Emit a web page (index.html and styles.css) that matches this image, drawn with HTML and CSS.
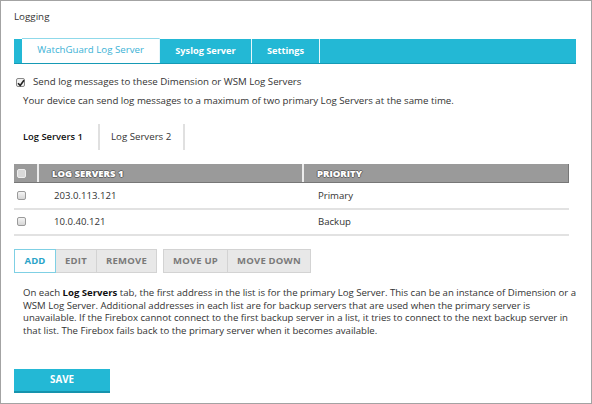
FILE: index.html
```html
<!DOCTYPE html>
<html>
<head>
<meta charset="utf-8">
<link rel="stylesheet" href="styles.css">
</head>
<body>
<div class="frame">
  <div class="title">Logging</div>
  <div class="tabbar">
    <div class="tab active">WatchGuard Log Server</div>
    <div class="tab syslog">Syslog Server</div>
    <div class="tab settings">Settings</div>
    <div class="tab rest"></div>
  </div>
  <label class="check-row">
    <span class="cb checked"><svg width="8" height="8" viewBox="0 0 8 8"><path d="M1 4.2 L3.2 6.4 L7 1.2" fill="none" stroke="#222" stroke-width="1.6"/></svg></span>
    <span>Send log messages to these Dimension or WSM Log Servers</span>
  </label>
  <p class="note">Your device can send log messages to a maximum of two primary Log Servers at the same time.</p>
  <div class="subtabs">
    <div class="subtab current">Log Servers 1</div>
    <div class="subtab">Log Servers 2</div>
  </div>
  <div class="table">
    <div class="row head">
      <div class="c-cb"><span class="cb hcb"></span></div>
      <div class="c-addr">LOG SERVERS 1</div>
      <div class="c-prio">PRIORITY</div>
    </div>
    <div class="row">
      <div class="c-cb"><span class="cb"></span></div>
      <div class="c-addr">203.0.113.121</div>
      <div class="c-prio">Primary</div>
    </div>
    <div class="row">
      <div class="c-cb"><span class="cb"></span></div>
      <div class="c-addr">10.0.40.121</div>
      <div class="c-prio">Backup</div>
    </div>
  </div>
  <div class="buttons">
    <div class="group">
      <div class="btn add">ADD</div>
      <div class="btn edit">EDIT</div>
      <div class="btn remove">REMOVE</div>
    </div>
    <div class="group">
      <div class="btn up">MOVE UP</div>
      <div class="btn down">MOVE DOWN</div>
    </div>
  </div>
  <p class="desc">On each <strong class="em">Log Servers</strong> tab, the first address in the list is for the primary Log Server. This can be an instance of Dimension or a WSM Log Server. Additional addresses in each list are for backup servers that are used when the primary server is unavailable. If the Firebox cannot connect to the first backup server in a list, it tries to connect to the next backup server in that list. The Firebox fails back to the primary server when it becomes available.</p>
  <div class="save">SAVE</div>
</div>
</body>
</html>
```
FILE: styles.css
```css
* { box-sizing: border-box; }
html, body { margin: 0; padding: 0; }
body {
  font-family: "Open Sans", "DejaVu Sans", sans-serif;
  color: #333;
  background: #fff;
}
.frame {
  width: 592px;
  height: 404px;
  border: 1px solid #a3a3a3;
  padding: 9px 15px 0 13px;
  overflow: hidden;
}
.title {
  font-size: 9.8px;
  line-height: 14px;
  color: #333;
}
.tabbar {
  margin-top: 15px;
  display: flex;
  height: 25px;
  background: #23b8d5;
  border-bottom: 1px solid #169ab5;
  padding-left: 8px;
}
.tab {
  font-size: 9.2px;
  line-height: 24px;
  color: #fff;
  font-weight: 700;
  text-align: center;
  border-right: 1px solid #e6f7fb;
  white-space: nowrap;
}
.tab.active {
  width: 138px;
  background: #fff;
  color: #3bb2d6;
  font-weight: 400;
  font-size: 9.7px;
  border-top: 1px solid #8fd9ea;
  line-height: 22px;
  margin-top: -1px;
  height: 25px;
}
.tab.syslog { width: 92px; }
.tab.settings { width: 68px; }
.tab.rest { flex: 1; border-right: none; }
.check-row {
  display: flex;
  align-items: center;
  margin-top: 11px;
  padding-left: 2px;
  font-size: 9.7px;
  line-height: 14px;
}
.cb {
  display: inline-block;
  width: 9px;
  height: 9px;
  border: 1px solid #9a9a9a;
  border-radius: 2px;
  background: linear-gradient(#f4f4f4, #d6d6d6);
  position: relative;
}
.cb.checked {
  width: 9px;
  height: 9px;
  background: #f2f2f2;
  border-color: #888;
  margin-right: 8px;
}
.cb.checked svg { position: absolute; left: 0; top: 0; }
.note {
  margin: 5px 0 0 9px;
  font-size: 9.7px;
  line-height: 14px;
}
.subtabs {
  display: flex;
  margin-top: 16px;
  height: 26px;
}
.subtab {
  font-size: 9.7px;
  line-height: 26px;
  padding: 0 0 0 9px;
  border-right: 2px solid #e0e0e0;
  width: 86px;
  white-space: nowrap;
}
.subtab + .subtab { padding-left: 11px; width: 85px; }
.subtab.current { color: #111; font-weight: 600; font-size: 9.4px; }
.table {
  margin-top: 14px;
  width: 555px;
}
.row {
  display: flex;
  height: 26.5px;
  align-items: center;
  border-bottom: 2px solid #e2e2e2;
  font-size: 9.6px;
  color: #333;
}
.row.head {
  height: 19px;
  background: #9a9a9a;
  border-bottom: 1px solid #777;
  border-right: 1px solid #777;
  align-items: stretch;
  color: #fff;
  font-weight: 800;
  font-size: 9.5px;
  text-shadow: 1px 0 0 #666, -1px 0 0 #666, 0 1px 0 #666, 0 -1px 0 #666;
}
.row.head > div { display: flex; align-items: center; }
.c-cb {
  width: 25px;
  padding-left: 3px;
  display: flex;
  align-items: center;
}
.row.head .c-cb { border-right: 2px solid #ececec; }
.hcb { background: #d9d9d9; border-color: #eee; }
.c-addr { width: 265px; padding-left: 15px; }
.row.head .c-addr { padding-left: 13px; border-right: 2px solid #ececec; }
.c-prio { flex: 1; padding-left: 14px; }
.row.head .c-prio { padding-left: 13px; }
.buttons {
  display: flex;
  gap: 6px;
  margin-top: 13px;
}
.group { display: flex; }
.btn {
  height: 24px;
  line-height: 22px;
  font-size: 9.5px;
  font-weight: 700;
  color: #7a7a7a;
  background: #e8e8e8;
  border: 1px solid #d3d3d3;
  text-align: center;
  letter-spacing: 0.2px;
}
.btn + .btn { border-left: none; }
.btn.add { width: 42px; background: #fff; color: #2aa3c8; border: 1px solid #7fd0e4; }
.btn.edit { width: 41px; }
.btn.remove { width: 60px; }
.btn.up { width: 65px; }
.btn.down { width: 83px; }
.desc {
  margin: 14px 0 0 9px;
  font-size: 9.6px;
  line-height: 12.5px;
  color: #333;
  width: 560px;
}
.desc .em { color: #111; font-weight: 700; }
.save {
  margin-top: 32px;
  width: 96px;
  height: 24px;
  line-height: 22px;
  background: #23b8d5;
  border-bottom: 2px solid #1693ad;
  color: #fff;
  font-weight: 700;
  font-size: 9.8px;
  text-align: center;
}
```
